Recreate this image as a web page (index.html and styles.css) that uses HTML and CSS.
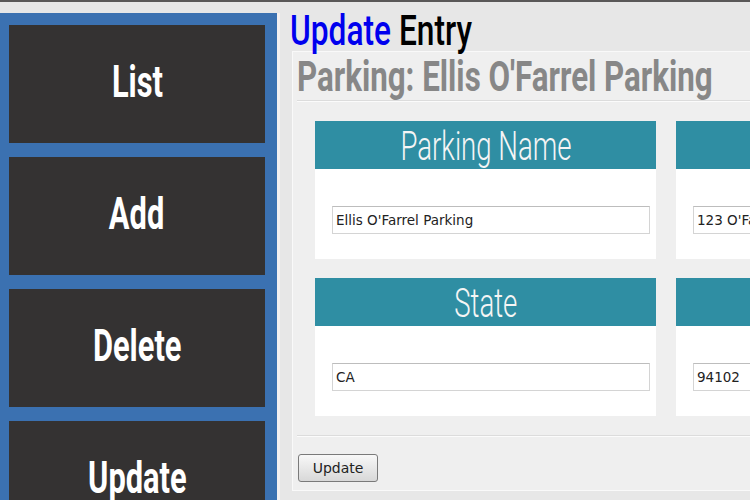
FILE: index.html
```html
<!DOCTYPE html>
<html>
<head>
<meta charset="utf-8">
<link rel="stylesheet" href="styles.css">
</head>
<body>
<div class="topline"></div>
<div class="page">
  <nav class="sidebar">
    <a class="navbtn"><span class="navlabel">List</span></a>
    <a class="navbtn"><span class="navlabel">Add</span></a>
    <a class="navbtn"><span class="navlabel">Delete</span></a>
    <a class="navbtn"><span class="navlabel">Update</span></a>
  </nav>
  <main class="main">
    <h1 class="heading"><span class="heading-text"><span class="blue">Update</span> Entry</span></h1>
    <section class="panel">
      <h2 class="title"><span class="title-text">Parking: Ellis O'Farrel Parking</span></h2>
      <div class="rule"></div>
      <div class="grid">
        <div class="card">
          <div class="card-head"><span class="card-label">Parking Name</span></div>
          <div class="card-body"><input class="field" type="text" value="Ellis O'Farrel Parking"></div>
        </div>
        <div class="card">
          <div class="card-head"><span class="card-label">Address</span></div>
          <div class="card-body"><input class="field" type="text" value="123 O'Farrel St"></div>
        </div>
        <div class="card">
          <div class="card-head"><span class="card-label">State</span></div>
          <div class="card-body"><input class="field" type="text" value="CA"></div>
        </div>
        <div class="card">
          <div class="card-head"><span class="card-label">Zip</span></div>
          <div class="card-body"><input class="field" type="text" value="94102"></div>
        </div>
      </div>
      <div class="rule"></div>
      <button class="submit" type="button">Update</button>
    </section>
  </main>
</div>
</body>
</html>
```
FILE: styles.css
```css
html, body {
  margin: 0;
  padding: 0;
  height: 100%;
  overflow: hidden;
}
body {
  background: #e7e7e7;
  font-family: "Roboto", "Liberation Sans", sans-serif;
}
.topline {
  height: 2px;
  background: #5a5858;
}
.page {
  display: flex;
  height: 498px;
}
.sidebar {
  width: 256px;
  flex: none;
  margin-top: 11px;
  background: #3b71b1;
  padding: 12px 12px 0 9px;
  display: flex;
  flex-direction: column;
  gap: 14px;
  border-right: 3px solid #f4f0f0;
}
.navbtn {
  height: 118px;
  flex: none;
  box-sizing: border-box;
  padding-bottom: 4px;
  background: #343232;
  display: flex;
  align-items: center;
  justify-content: center;
}
.navlabel {
  display: inline-block;
  color: #fff;
  font-weight: 700;
  font-size: 44px;
  line-height: 1;
  transform: scaleX(0.7);
}
.main {
  flex: 1;
  min-width: 0;
  padding-left: 10px;
}
.heading {
  margin: 9px 0 0 0;
  font-size: 42px;
  font-weight: 500;
  line-height: 40px;
  color: #000;
  white-space: nowrap;
}
.heading-text {
  display: inline-block;
  transform: scaleX(0.755);
  transform-origin: left center;
}
.blue {
  color: #0000ee;
}
.panel {
  margin-left: 2px;
  width: 760px;
  background: #efefef;
  border: 1px solid #f9f9f9;
  border-right: none;
  padding: 5px 0 8px 4px;
}
.title {
  margin: 0;
  font-size: 42px;
  font-weight: 700;
  line-height: 40px;
  color: #878787;
  white-space: nowrap;
}
.title-text {
  display: inline-block;
  transform: scaleX(0.745);
  transform-origin: left center;
}
.rule {
  height: 1px;
  background: #dcdcdc;
  border-bottom: 1px solid #fbfbfb;
  margin-top: 3px;
}
.grid {
  display: grid;
  grid-template-columns: 341px 341px;
  gap: 19px 20px;
  margin: 19px 0 19px 18px;
}
.card {
  background: #fff;
}
.card-head {
  height: 48px;
  background: #2f8ea3;
  text-align: center;
  line-height: 52px;
  white-space: nowrap;
}
.card-label {
  display: inline-block;
  color: #f5f5f5;
  font-size: 40px;
  font-weight: 300;
  transform: scaleX(0.69);
}
.card-body {
  height: 90px;
  box-sizing: border-box;
  padding: 37px 6px 0 17px;
}
.field {
  display: block;
  width: 100%;
  height: 28px;
  box-sizing: border-box;
  margin: 0;
  border: 1px solid #d4d4d4;
  border-top-color: #bdbdbd;
  background: #fff;
  padding: 0 3px;
  font-family: "DejaVu Sans", sans-serif;
  font-size: 13.5px;
  color: #222;
}
.submit {
  display: block;
  margin: 17px 0 0 1px;
  width: 80px;
  height: 28px;
  border: 1px solid #7a7a7a;
  border-radius: 3px;
  background: linear-gradient(#f8f8f8, #d8d8d8);
  font-family: "DejaVu Sans", sans-serif;
  font-size: 14px;
  color: #222;
  padding: 0;
}
```
